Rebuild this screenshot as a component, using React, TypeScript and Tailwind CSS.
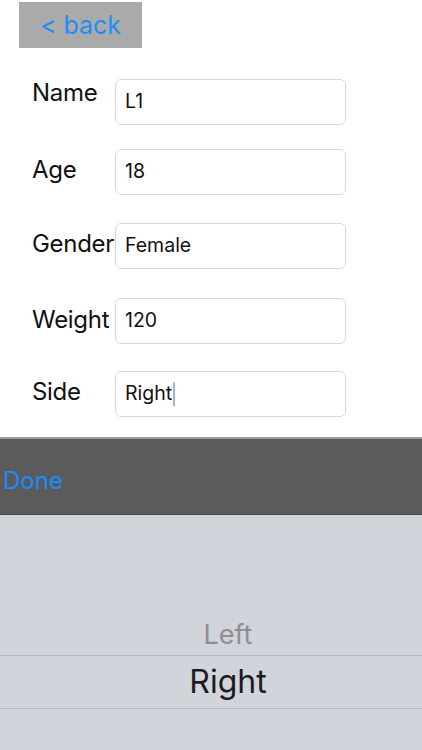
import React from 'react';

const FONT = { fontFamily: 'Inter, "Noto Sans", sans-serif' };

const ROWS = [
  { label: 'Name', value: 'L1', mt: 'mt-[31px]', pb: 'pb-[18px]' },
  { label: 'Age', value: '18', mt: 'mt-[24px]', pb: 'pb-[4px]' },
  { label: 'Gender', value: 'Female', mt: 'mt-[28px]', pb: 'pb-[4px]' },
  { label: 'Weight', value: '120', mt: 'mt-[29px]', pb: 'pb-[3px]' },
  { label: 'Side', value: 'Right', mt: 'mt-[27px]', pb: 'pb-[4px]', cursor: true },
];

export default function App() {
  return (
    <div className="w-[422px] h-[750px] bg-white flex flex-col overflow-hidden" style={FONT}>
      {/* back button */}
      <div className="mt-[2px] ml-[19px] w-[123px] h-[46px] bg-[#aaaaaa] flex items-center justify-center text-[25px] text-[#1e8ef5] leading-none">
        &lt; back
      </div>

      {/* form */}
      <div className="flex flex-col">
        {ROWS.map((r) => (
          <div key={r.label} className={`flex items-center ${r.mt}`}>
            <div className={`w-[115px] h-[46px] pl-[32px] flex items-center text-[24px] text-[#111] tracking-[-0.3px] ${r.pb}`}>
              {r.label}
            </div>
            <div className="w-[231px] h-[46px] border border-[#d9d9d9] rounded-[6px] pl-[9px] flex items-center text-[19.5px] text-[#111]">
              {r.value}
              {r.cursor && <span className="ml-[1px] w-[2px] h-[24px] bg-[#9bb4ee]" />}
            </div>
          </div>
        ))}
      </div>

      {/* toolbar */}
      <div className="mt-[20px] h-[78px] bg-[#5b5b5b] border-t-2 border-[#9a9a9a] border-b border-b-[#474747] flex items-center pl-[3px] pt-[8px] text-[24px] text-[#1a8cff]">
        Done
      </div>

      {/* picker */}
      <div className="flex-1 bg-[#d1d4db] flex flex-col">
        <div className="h-[100px]" />
        <div className="h-[40px] flex items-center justify-center pl-[34px] text-[27px] text-[#8e8e93]">
          Left
        </div>
        <div className="h-[54px] border-y border-[#b7b9bf] flex items-center justify-center pl-[34px] text-[32px] text-[#1c1c1e]">
          Right
        </div>
      </div>
    </div>
  );
}
